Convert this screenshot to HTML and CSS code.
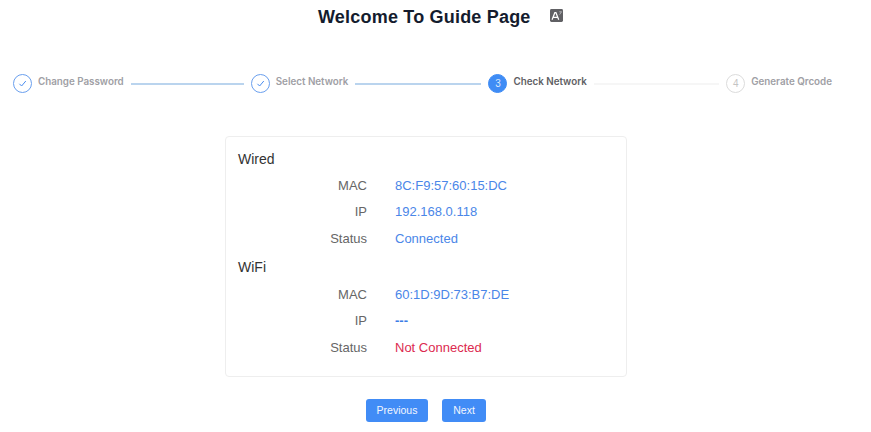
FILE: index.html
```html
<!doctype html>
<html>

<head>
	<meta charset="utf-8">
	<title>Welcome To Guide Page</title>
	<link rel="stylesheet" href="styles.css">
</head>

<body>
	<div class="header">
		<h1>Welcome To Guide Page</h1>
		<svg class="lang" width="13" height="13" viewBox="0 0 14 14">
			<rect width="14" height="14" rx="1.5" fill="#606064"/>
			<path d="M2.2 11.5 5.2 4h1.2l3 7.5M3.4 9h5" fill="none" stroke="#fff" stroke-width="1.3"/>
			<path d="M10 3h2.6M10.4 6l2-3" fill="none" stroke="#c9c9cc" stroke-width=".8"/>
		</svg>
	</div>

	<div class="steps">
		<div class="step finish">
			<span class="dot">
				<svg width="9" height="9" viewBox="0 0 9 9"><path d="M1.4 4.8 3.6 7 7.8 2" fill="none" stroke="#4a8df0" stroke-width="1"/></svg>
			</span>
			<span class="name">Change Password</span>
			<span class="line"></span>
		</div>
		<div class="step finish">
			<span class="dot">
				<svg width="9" height="9" viewBox="0 0 9 9"><path d="M1.4 4.8 3.6 7 7.8 2" fill="none" stroke="#4a8df0" stroke-width="1"/></svg>
			</span>
			<span class="name">Select Network</span>
			<span class="line"></span>
		</div>
		<div class="step active">
			<span class="dot">3</span>
			<span class="name">Check Network</span>
			<span class="line"></span>
		</div>
		<div class="step wait">
			<span class="dot">4</span>
			<span class="name">Generate Qrcode</span>
		</div>
	</div>

	<div class="card">
		<div class="group">Wired</div>
		<div class="row"><span class="label">MAC</span><span class="value">8C:F9:57:60:15:DC</span></div>
		<div class="row"><span class="label">IP</span><span class="value">192.168.0.118</span></div>
		<div class="row"><span class="label">Status</span><span class="value">Connected</span></div>
		<div class="group second">WiFi</div>
		<div class="row"><span class="label">MAC</span><span class="value">60:1D:9D:73:B7:DE</span></div>
		<div class="row"><span class="label">IP</span><span class="value empty">---</span></div>
		<div class="row"><span class="label">Status</span><span class="value error">Not Connected</span></div>
	</div>

	<div class="buttons">
		<button class="btn prev">Previous</button>
		<button class="btn next">Next</button>
	</div>
</body>

</html>
```

FILE: styles.css
```css
* {
	margin: 0;
	padding: 0;
	box-sizing: border-box;
}

body {
	font-family: "Liberation Sans", Arial, sans-serif;
	background: #fff;
	color: #333;
	width: 871px;
	height: 432px;
	overflow: hidden;
}

.header {
	display: flex;
	align-items: center;
	height: 34px;
	padding-left: 318px;
}

h1 {
	font-size: 18px;
	font-weight: bold;
	color: #141c2e;
	letter-spacing: .2px;
}

.lang {
	margin-left: 19px;
	margin-top: -4px;
}

.steps {
	display: flex;
	align-items: center;
	margin-top: 40px;
	padding-left: 13px;
	width: 832px;
}

.step {
	display: flex;
	align-items: center;
	flex: 1;
}

.step.wait {
	flex: none;
}

.dot {
	width: 19px;
	height: 19px;
	border-radius: 50%;
	border: 1px solid #6a9fee;
	display: flex;
	align-items: center;
	justify-content: center;
	font-size: 10px;
	flex: none;
}

.name {
	font-family: Inter, "Liberation Sans", sans-serif;
	font-size: 9.8px;
	font-weight: 600;
	color: #a0a0a5;
	margin-left: 6px;
	margin-top: -4px;
	white-space: nowrap;
}

.line {
	flex: 1;
	height: 2px;
	margin: 1px 7px 0;
	background: #bad4ee;
}

.active .dot {
	background: #3f8cf5;
	border-color: #3f8cf5;
	color: #dbe8fb;
}

.active .name {
	color: #5f5f64;
}

.active .line {
	background: #f6f6f6;
}

.wait .dot {
	border-color: #dcdcdc;
	color: #c4c4c4;
}

.card {
	width: 402px;
	height: 241px;
	margin: 43px 0 0 225px;
	padding: 9px 12px;
	border: 1px solid #eeeeee;
	border-radius: 4px;
}

.group {
	font-size: 14px;
	line-height: 26.5px;
	color: #333;
}

.group.second {
	margin: 1.5px 0 1.5px;
}

.row {
	display: flex;
	font-size: 13px;
	line-height: 26.5px;
}

.label {
	width: 129px;
	text-align: right;
	color: #666;
}

.value {
	margin-left: 28px;
	color: #4a86e8;
}

.value.empty {
	color: #3a7de6;
	font-weight: bold;
}

.value.error {
	color: #dc2a4f;
}

.buttons {
	display: flex;
	gap: 14px;
	margin: 22px 0 0 366px;
}

.btn {
	height: 23px;
	padding-bottom: 2px;
	border: 0;
	border-radius: 3px;
	background: #418cf6;
	color: #f2f6fe;
	font-family: "Liberation Sans", Arial, sans-serif;
	font-size: 10.5px;
}

.prev {
	width: 62px;
}

.next {
	width: 44px;
}
```
